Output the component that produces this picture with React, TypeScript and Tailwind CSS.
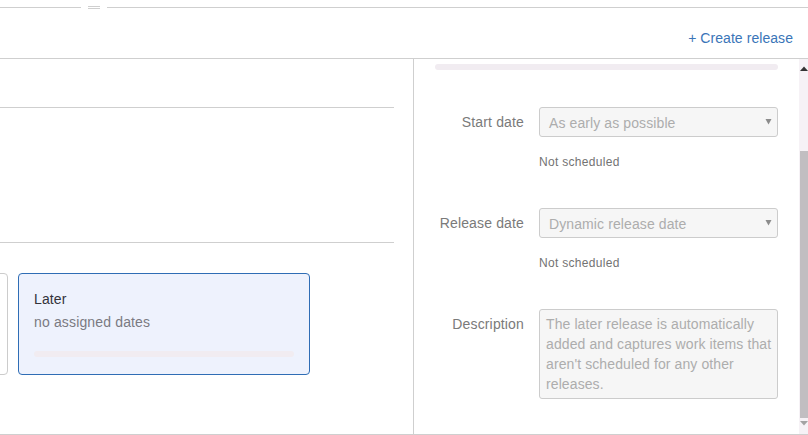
import React from "react";

function Select({ value }: { value: string }) {
  return (
    <div className="flex h-[30px] w-[239px] items-center justify-between rounded-[3px] border border-[#cccccc] bg-[#f6f6f6] pl-[9px] pr-[5px] pt-[2px] text-[14px] tracking-[0.1px] text-[#adadad]">
      <span>{value}</span>
      <svg width="7" height="7" viewBox="0 0 7 7" className="mb-[3px]"><path d="M0.5 1H6.5L3.5 6.5Z" fill="#8c8c8c" /></svg>
    </div>
  );
}

function Row({ label, children, className }: { label: string; children: React.ReactNode; className?: string }) {
  return (
    <div className={"flex items-start " + (className ?? "")}>
      <div className="w-[89px] shrink-0 pt-[5px] text-right text-[14px] leading-[20px] tracking-[0.15px] whitespace-nowrap text-[#7a7a7a]">{label}</div>
      <div className="ml-[15px]">{children}</div>
    </div>
  );
}

export default function App() {
  return (
    <div className="flex h-[435px] w-[808px] flex-col overflow-hidden bg-white font-['Liberation_Sans',sans-serif]">
      <div className="flex h-[9px] shrink-0 items-end">
        <div className="mb-[1px] h-px w-[81px] bg-[#cfcfcf]" />
        <div className="mx-[7px] flex w-[12px] flex-col gap-[1px]">
          <div className="h-px bg-[#cfcfcf]" />
          <div className="h-px bg-[#cfcfcf]" />
        </div>
        <div className="mb-[1px] h-px flex-1 bg-[#cfcfcf]" />
      </div>
      <div className="flex h-[50px] shrink-0 items-end justify-end border-b border-[#cfcfcf] pb-[11px] pr-[15px] text-[14px] leading-[18px] tracking-[0.06px] text-[#3a75b8]">
        + Create release
      </div>
      <div className="flex min-h-0 flex-1 border-b border-[#cfcfcf]">
        <div className="w-[414px] shrink-0 border-r border-[#cfcfcf] pr-[19px] pt-[48px]">
          <div className="h-[135px] border-t border-[#cfcfcf]" />
          <div className="border-t border-[#cfcfcf] pt-[30px]">
            <div className="flex gap-[10px]">
              <div className="-ml-[10px] h-[102px] w-[18px] rounded-[4px] border border-[#cccccc]" />
              <div className="flex h-[102px] w-[292px] flex-col rounded-[4px] border border-[#2f6db5] bg-[#eef2fd] px-[15px] pt-[15px]">
                <div className="text-[14px] leading-[20px] tracking-[0.1px] text-[#33333b]">Later</div>
                <div className="mt-[3px] text-[14px] leading-[20px] tracking-[0.15px] text-[#7a7a82]">no assigned dates</div>
                <div className="mt-[19px] h-[6px] rounded-[3px] bg-[#f1ecf1]" />
              </div>
            </div>
          </div>
        </div>
        <div className="flex min-w-0 flex-1">
          <div className="min-w-0 flex-1 pl-[21px] pr-[21px] pt-[5px]">
            <div className="h-[6px] rounded-[3px] bg-[#f1ecf1]" />
            <Row label="Start date" className="mt-[37px]">
              <Select value="As early as possible" />
              <div className="mt-[17px] text-[12px] leading-[16px] tracking-[0.3px] text-[#737373]">Not scheduled</div>
            </Row>
            <Row label="Release date" className="mt-[38px]">
              <Select value="Dynamic release date" />
              <div className="mt-[17px] text-[12px] leading-[16px] tracking-[0.3px] text-[#737373]">Not scheduled</div>
            </Row>
            <Row label="Description" className="mt-[38px]">
              <div className="h-[90px] w-[239px] rounded-[3px] border border-[#cccccc] bg-[#f6f6f6] pl-[6px] pr-[4px] pt-[4px] text-[14px] leading-[20px] tracking-[0.1px] text-[#adadad]">
                The later release is automatically added and captures work items that aren't scheduled for any other releases.
              </div>
            </Row>
          </div>
          <div className="flex w-[9px] shrink-0 flex-col overflow-hidden bg-[#f6f2f6]">
            <div className="h-[92px] shrink-0 pl-[1px] pt-[7px]">
              <svg width="8" height="5" viewBox="0 0 8 5" className="block"><path d="M0 5L4 0.5L8 5Z" fill="#333333" /></svg>
            </div>
            <div className="ml-[1px] h-[267px] shrink-0 bg-[#c1bec1]" />
            <div className="pl-[1px] pt-[3px]">
              <svg width="8" height="5" viewBox="0 0 8 5" className="block"><path d="M0 0L8 0L4 4.5Z" fill="#a3a3a3" /></svg>
            </div>
          </div>
        </div>
      </div>
    </div>
  );
}
